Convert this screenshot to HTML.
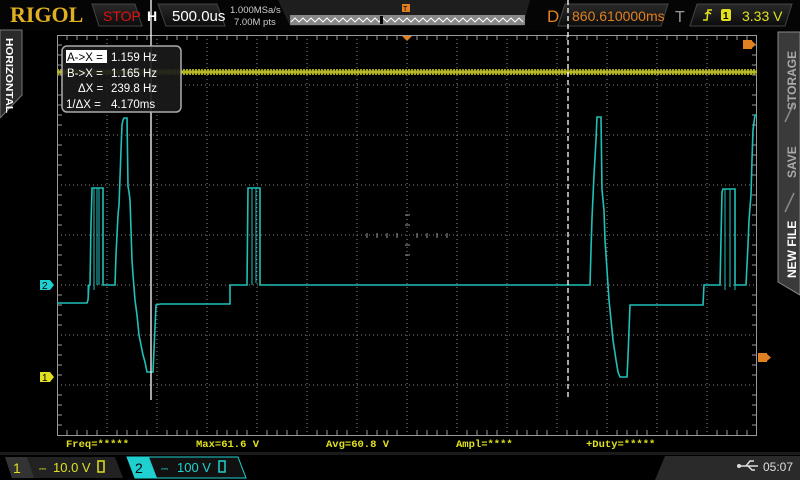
<!DOCTYPE html>
<html><head><meta charset="utf-8"><style>
body{margin:0;width:800px;height:480px;background:#000;overflow:hidden;font-family:"Liberation Sans",sans-serif}
svg{position:absolute;left:0;top:0}
</style></head><body>
<svg width="800" height="480" viewBox="0 0 800 480" xmlns="http://www.w3.org/2000/svg">
<defs>
<linearGradient id="tb" x1="0" y1="0" x2="0" y2="1"><stop offset="0" stop-color="#2a2a2a"/><stop offset="1" stop-color="#0c0c0c"/></linearGradient>
</defs>
<rect x="0" y="0" width="800" height="30" fill="#050505"/>
<text x="10" y="22" font-family="Liberation Serif" font-weight="bold" font-size="22" fill="#e0b020">RIGOL</text>
<polygon points="92,4 135,4 142,26 99,26" fill="url(#tb)" stroke="#444"/>
<text x="103" y="21" font-size="14" fill="#e01010">STOP</text>
<text x="147" y="21" font-size="14" font-weight="bold" fill="#fff">H</text>
<polygon points="158,4 217,4 225,26 166,26" fill="url(#tb)" stroke="#444"/>
<text x="172" y="21" font-size="15" fill="#fff">500.0us</text>
<text x="230" y="13" font-size="9.5" fill="#ccc">1.000MSa/s</text>
<text x="234" y="25" font-size="9.5" fill="#ccc">7.00M pts</text>
<polygon points="278,0 530,0 523,26 290,26" fill="#1e1e1e"/>
<rect x="290" y="15" width="235" height="10" fill="#888"/>
<polyline points="291,22 295,18 299,22 303,18 307,22 311,18 315,22 319,18 323,22 327,18 331,22 335,18 339,22 343,18 347,22 351,18 355,22 359,18 363,22 367,18 371,22 375,18 379,22 383,18 387,22 391,18 395,22 399,18 403,22 407,18 411,22 415,18 419,22 423,18 427,22 431,18 435,22 439,18 443,22 447,18 451,22 455,18 459,22 463,18 467,22 471,18 475,22 479,18 483,22 487,18 491,22 495,18 499,22 503,18 507,22 511,18 515,22 519,18 523,22" fill="none" stroke="#fff" stroke-width="1"/>
<rect x="380" y="16" width="3" height="8" fill="#000"/>
<rect x="402" y="4" width="8" height="8" fill="#e08020"/>
<text x="403" y="11" font-size="7" fill="#000">T</text>
<text x="547" y="22" font-size="17" fill="#e08020">D</text>
<polygon points="565,4 668,4 661,26 558,26" fill="url(#tb)" stroke="#444"/>
<text x="572" y="21" font-size="14" fill="#e08020">860.610000ms</text>
<text x="675" y="22" font-size="16" fill="#999">T</text>
<polygon points="697,4 792,4 785,26 690,26" fill="url(#tb)" stroke="#444"/>
<path d="M703,20 L707,20 L708,10 L712,10 M705,14 L708,12 L711,14" stroke="#e0e020" stroke-width="1.5" fill="none"/>
<rect x="721" y="9" width="10" height="12" rx="2" fill="#e0e020"/>
<text x="723" y="19" font-size="10" font-weight="bold" fill="#000">1</text>
<text x="742" y="21" font-size="14" fill="#e0e020">3.33 V</text>

<polygon points="0,30 22,30 22,95 0,118" fill="#2a2a2a" stroke="#777"/>
<text transform="translate(6,38) rotate(90)" font-size="10.5" font-weight="bold" fill="#fff" textLength="75" lengthAdjust="spacingAndGlyphs">HORIZONTAL</text>
<polygon points="778,32 800,32 800,295 778,282" fill="#3a3a3a" stroke="#888"/>
<text transform="translate(796,278) rotate(-90)" font-size="12" font-weight="bold" fill="#fff">NEW FILE</text>
<text transform="translate(796,178) rotate(-90)" font-size="12" font-weight="bold" fill="#aaa">SAVE</text>
<text transform="translate(796,110) rotate(-90)" font-size="12" font-weight="bold" fill="#aaa">STORAGE</text>
<path d="M785,212 L794,193 M785,122 L794,103" stroke="#888" stroke-width="1.5"/>

<g stroke="#888" stroke-width="1" stroke-dasharray="1,3" fill="none">
<path d="M107,35V435M157,35V435M207,35V435M257,35V435M307,35V435M357,35V435M457,35V435M507,35V435M557,35V435M607,35V435M657,35V435M707,35V435"/>
<path d="M57,85H757M57,135H757M57,185H757M57,285H757M57,335H757M57,385H757"/>
<path d="M57,235H757M407,35V435"/>
</g>
<rect x="57.5" y="35.5" width="699" height="400" fill="none" stroke="#999"/>
<g stroke="#999">
<path d="M57,45h5M57,55h5M57,65h5M57,75h5M57,95h5M57,105h5M57,115h5M57,125h5M57,145h5M57,155h5M57,165h5M57,175h5M57,195h5M57,205h5M57,215h5M57,225h5M57,245h5M57,255h5M57,265h5M57,275h5M57,295h5M57,305h5M57,315h5M57,325h5M57,345h5M57,355h5M57,365h5M57,375h5M57,395h5M57,405h5M57,415h5M57,425h5"/>
<path d="M757,45h-5M757,55h-5M757,65h-5M757,75h-5M757,95h-5M757,105h-5M757,115h-5M757,125h-5M757,145h-5M757,155h-5M757,165h-5M757,175h-5M757,195h-5M757,205h-5M757,215h-5M757,225h-5M757,245h-5M757,255h-5M757,265h-5M757,275h-5M757,295h-5M757,305h-5M757,315h-5M757,325h-5M757,345h-5M757,355h-5M757,365h-5M757,375h-5M757,395h-5M757,405h-5M757,415h-5M757,425h-5"/>
<path d="M67,35v5M77,35v5M87,35v5M97,35v5M117,35v5M127,35v5M137,35v5M147,35v5M167,35v5M177,35v5M187,35v5M197,35v5M217,35v5M227,35v5M237,35v5M247,35v5M267,35v5M277,35v5M287,35v5M297,35v5M317,35v5M327,35v5M337,35v5M347,35v5M367,35v5M377,35v5M387,35v5M397,35v5M417,35v5M427,35v5M437,35v5M447,35v5M467,35v5M477,35v5M487,35v5M497,35v5M517,35v5M527,35v5M537,35v5M547,35v5M567,35v5M577,35v5M587,35v5M597,35v5M617,35v5M627,35v5M637,35v5M647,35v5M667,35v5M677,35v5M687,35v5M697,35v5M717,35v5M727,35v5M737,35v5M747,35v5"/>
<path d="M67,435v-5M77,435v-5M87,435v-5M97,435v-5M117,435v-5M127,435v-5M137,435v-5M147,435v-5M167,435v-5M177,435v-5M187,435v-5M197,435v-5M217,435v-5M227,435v-5M237,435v-5M247,435v-5M267,435v-5M277,435v-5M287,435v-5M297,435v-5M317,435v-5M327,435v-5M337,435v-5M347,435v-5M367,435v-5M377,435v-5M387,435v-5M397,435v-5M417,435v-5M427,435v-5M437,435v-5M447,435v-5M467,435v-5M477,435v-5M487,435v-5M497,435v-5M517,435v-5M527,435v-5M537,435v-5M547,435v-5M567,435v-5M577,435v-5M587,435v-5M597,435v-5M617,435v-5M627,435v-5M637,435v-5M647,435v-5M667,435v-5M677,435v-5M687,435v-5M697,435v-5M717,435v-5M727,435v-5M737,435v-5M747,435v-5"/>
<path d="M387,233v5M397,233v5M417,233v5M427,233v5M377,233v5M367,233v5M447,233v5M437,233v5M405,225h5M405,245h5M405,215h5M405,255h5"/>
</g>
<polygon points="402,36 412,36 407,41" fill="#e08020"/>
<rect x="743" y="40" width="9" height="9" fill="#e08020"/><polygon points="752,41 756,44.5 752,48" fill="#e08020"/>
<rect x="758" y="353" width="9" height="9" fill="#e08020"/><polygon points="767,354 771,357.5 767,361" fill="#e08020"/>

<path d="M57,72H757" stroke="#a0a018" stroke-width="6" stroke-dasharray="2,1"/>
<path d="M57,72H757" stroke="#b8b828" stroke-width="3"/>

<polyline fill="none" stroke="#20c0b8" stroke-width="1.6" points="
57,303 87,303 88,300 89,285 90,285 91,225 92,190 92,188 103,188 103,285 115,285 116,255 118,215 119,205 120,178 121,150 122,125 123,120 124,118 127,118 128,186 129,192 130,200 131,230 132,260 133,275 135,300 137,315 139,335 141,345 143,355 145,362 147,372 153,372 154,350 156,305 160,304 230,304 230,285 247,285 248,188 260,188 260,285 262,285 590,285 591,250 592,218 594,175 596,140 597,117 601,117 602,190 604,210 605,240 607,270 609,300 611,320 613,340 616,360 618,372 620,377 627,377 628,356 630,305 703,305 704,285 720,285 722,192 723,189 735,189 735,285 746,285 748,245 749,220 751,195 752,160 753,130 755,115 757,115"/>
<path d="M94,188V290M97,188V285M99,188V285M252,188V285M256,188V283M725,189V290M730,189V287M735,189V290M88,285V300" stroke="#20c0b8" stroke-width="1"/>

<line x1="151" y1="0" x2="151" y2="400" stroke="#fff" stroke-width="1.3"/>
<line x1="568" y1="0" x2="568" y2="400" stroke="#fff" stroke-width="1.3" stroke-dasharray="5,3"/>

<rect x="40" y="280" width="10" height="10" fill="#20d0d0"/><polygon points="50,280 54,285 50,290" fill="#20d0d0"/>
<text x="42" y="289" font-size="10" fill="#000">2</text>
<rect x="40" y="372" width="10" height="10" fill="#e0e020"/><polygon points="50,372 54,377 50,382" fill="#e0e020"/>
<text x="42" y="381" font-size="10" fill="#000">1</text>

<rect x="62" y="46" width="119" height="66" rx="5" fill="#1a1a1a" fill-opacity="0.92" stroke="#aaa" stroke-width="1.5"/>
<rect x="66" y="50" width="41" height="13" fill="#fff"/>
<g font-size="11.5" fill="#fff">
<text x="67" y="61" fill="#000">A-&gt;X =</text><text x="111" y="61">1.159 Hz</text>
<text x="67" y="77">B-&gt;X =</text><text x="111" y="77">1.165 Hz</text>
<text x="78" y="92">ΔX =</text><text x="111" y="92">239.8 Hz</text>
<text x="66" y="108">1/ΔX =</text><text x="111" y="108">4.170ms</text>
</g>

<g font-family="Liberation Mono" font-weight="bold" font-size="10.5" fill="#e0e020">
<text x="66" y="447">Freq=*****</text>
<text x="196" y="447">Max=61.6 V</text>
<text x="326" y="447">Avg=60.8 V</text>
<text x="456" y="447">Ampl=****</text>
<text x="586" y="447">+Duty=*****</text>
</g>
<rect x="0" y="452" width="800" height="28" fill="#000"/>
<rect x="0" y="452" width="800" height="3" fill="#1a1a1a"/>
<polygon points="665,456 800,456 800,480 655,480" fill="#2a2a2a"/>
<polygon points="5,457 115,457 123,478 12,478" fill="#222"/>
<polygon points="5,457 27,457 34,478 12,478" fill="#333"/>
<text x="13" y="473" font-size="14" fill="#e0e020">1</text>
<text x="39" y="472" font-size="9" fill="#e0e020">⎓</text>
<text x="53" y="472" font-size="13" fill="#e0e020">10.0 V</text>
<rect x="98" y="461" width="6" height="11" fill="none" stroke="#e0e020" stroke-width="1.5"/>
<polygon points="127,457 238,457 246,478 135,478" fill="#111" stroke="#20d0d0"/>
<polygon points="127,457 149,457 157,478 135,478" fill="#20d0d0"/>
<text x="135" y="473" font-size="14" fill="#000">2</text>
<text x="161" y="472" font-size="9" fill="#20d0d0">⎓</text>
<text x="177" y="472" font-size="13" fill="#20d0d0">100 V</text>
<rect x="219" y="461" width="6" height="11" fill="none" stroke="#20d0d0" stroke-width="1.5"/>
<path d="M739,466H758M746,466L750,461H754M748,466L752,470H755" stroke="#ddd" stroke-width="1.5" fill="none"/>
<circle cx="739" cy="466" r="2" fill="#ddd"/>
<text x="763" y="471" font-size="12" fill="#ddd">05:07</text>
</svg>
</body></html>
